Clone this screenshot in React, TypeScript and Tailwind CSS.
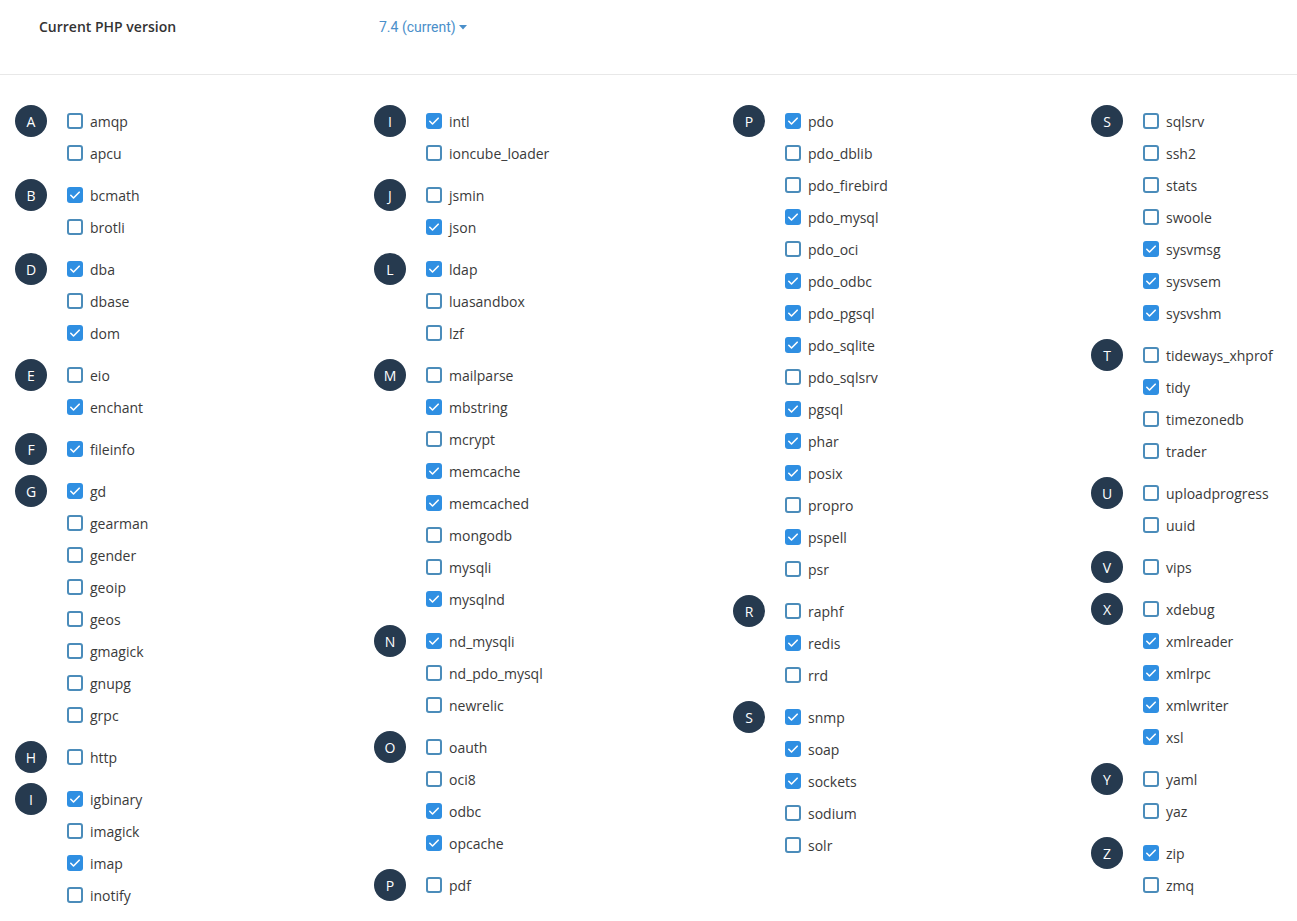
import React from "react";

type Ext = [string, boolean];
type Group = { letter: string; items: Ext[] };

const columns: Group[][] = [
  [
    { letter: "A", items: [["amqp", false], ["apcu", false]] },
    { letter: "B", items: [["bcmath", true], ["brotli", false]] },
    { letter: "D", items: [["dba", true], ["dbase", false], ["dom", true]] },
    { letter: "E", items: [["eio", false], ["enchant", true]] },
    { letter: "F", items: [["fileinfo", true]] },
    {
      letter: "G",
      items: [
        ["gd", true],
        ["gearman", false],
        ["gender", false],
        ["geoip", false],
        ["geos", false],
        ["gmagick", false],
        ["gnupg", false],
        ["grpc", false],
      ],
    },
    { letter: "H", items: [["http", false]] },
    { letter: "I", items: [["igbinary", true], ["imagick", false], ["imap", true], ["inotify", false]] },
  ],
  [
    { letter: "I", items: [["intl", true], ["ioncube_loader", false]] },
    { letter: "J", items: [["jsmin", false], ["json", true]] },
    { letter: "L", items: [["ldap", true], ["luasandbox", false], ["lzf", false]] },
    {
      letter: "M",
      items: [
        ["mailparse", false],
        ["mbstring", true],
        ["mcrypt", false],
        ["memcache", true],
        ["memcached", true],
        ["mongodb", false],
        ["mysqli", false],
        ["mysqlnd", true],
      ],
    },
    { letter: "N", items: [["nd_mysqli", true], ["nd_pdo_mysql", false], ["newrelic", false]] },
    { letter: "O", items: [["oauth", false], ["oci8", false], ["odbc", true], ["opcache", true]] },
    { letter: "P", items: [["pdf", false]] },
  ],
  [
    {
      letter: "P",
      items: [
        ["pdo", true],
        ["pdo_dblib", false],
        ["pdo_firebird", false],
        ["pdo_mysql", true],
        ["pdo_oci", false],
        ["pdo_odbc", true],
        ["pdo_pgsql", true],
        ["pdo_sqlite", true],
        ["pdo_sqlsrv", false],
        ["pgsql", true],
        ["phar", true],
        ["posix", true],
        ["propro", false],
        ["pspell", true],
        ["psr", false],
      ],
    },
    { letter: "R", items: [["raphf", false], ["redis", true], ["rrd", false]] },
    { letter: "S", items: [["snmp", true], ["soap", true], ["sockets", true], ["sodium", false], ["solr", false]] },
  ],
  [
    {
      letter: "S",
      items: [
        ["sqlsrv", false],
        ["ssh2", false],
        ["stats", false],
        ["swoole", false],
        ["sysvmsg", true],
        ["sysvsem", true],
        ["sysvshm", true],
      ],
    },
    { letter: "T", items: [["tideways_xhprof", false], ["tidy", true], ["timezonedb", false], ["trader", false]] },
    { letter: "U", items: [["uploadprogress", false], ["uuid", false]] },
    { letter: "V", items: [["vips", false]] },
    { letter: "X", items: [["xdebug", false], ["xmlreader", true], ["xmlrpc", true], ["xmlwriter", true], ["xsl", true]] },
    { letter: "Y", items: [["yaml", false], ["yaz", false]] },
    { letter: "Z", items: [["zip", true], ["zmq", false]] },
  ],
];

function Checkbox({ checked }: { checked: boolean }) {
  if (checked) {
    return (
      <span className="flex h-4 w-4 shrink-0 items-center justify-center rounded-[3px] bg-[#2f8fe2]">
        <svg viewBox="0 0 16 16" className="h-4 w-4" fill="none">
          <path d="M3.8 8.3l2.7 2.7 5.7-5.8" stroke="#fff" strokeWidth={1.6} strokeLinecap="round" strokeLinejoin="round" />
        </svg>
      </span>
    );
  }
  return <span className="h-4 w-4 shrink-0 rounded-[3px] border-2 border-[#4b8cba] bg-white" />;
}

function LetterGroup({ group }: { group: Group }) {
  return (
    <div className="mb-[10px] flex">
      <div className="flex h-8 w-8 shrink-0 items-center justify-center rounded-full bg-[#263a4f] text-[14px] font-normal text-white">
        {group.letter}
      </div>
      <ul className="ml-5">
        {group.items.map(([name, checked]) => (
          <li key={name} className="flex h-8 items-center gap-[7px] text-[14px] text-[#3a3a3a]">
            <Checkbox checked={checked} />
            <span>{name}</span>
          </li>
        ))}
      </ul>
    </div>
  );
}

export default function App() {
  return (
    <div className="h-[921px] w-[1297px] overflow-hidden bg-white font-['Open_Sans',sans-serif]">
      <div className="flex h-[75px] border-b border-[#e8e8e8] pt-[17px]">
        <div className="w-[379px] pl-[39px] text-[14px] font-semibold leading-5 text-[#333]">Current PHP version</div>
        <button className="flex h-5 items-center gap-[3px] font-['Roboto',sans-serif] text-[14px] leading-5 text-[#4a8fca]">
          7.4 (current)
          <svg viewBox="0 0 8 5" className="h-[5px] w-2">
            <path d="M0 0h8L4 4.5z" fill="#4a8fca" />
          </svg>
        </button>
      </div>
      <div className="grid grid-cols-[359px_359px_358px_206px] pl-[15px] pt-[30px]">
        {columns.map((col, i) => (
          <div key={i}>
            {col.map((g) => (
              <LetterGroup key={g.letter + i} group={g} />
            ))}
          </div>
        ))}
      </div>
    </div>
  );
}
